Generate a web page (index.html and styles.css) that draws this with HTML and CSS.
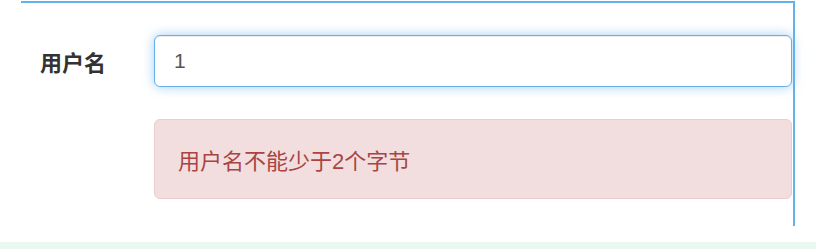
FILE: index.html
```html
<!DOCTYPE html>
<html lang="zh">
<head>
<meta charset="utf-8">
<title>表单</title>
<link rel="stylesheet" href="styles.css">
</head>
<body>
<div class="frame">
  <div class="row">
    <label class="label" for="username">用户名</label>
    <input class="input" id="username" type="text" value="1">
  </div>
  <div class="row">
    <span></span>
    <div class="alert">用户名不能少于2个字节</div>
  </div>
</div>
<div class="band"></div>
</body>
</html>
```
FILE: styles.css
```css
html, body {
  margin: 0;
  padding: 0;
  background: #fff;
  font-family: "Liberation Sans", Arial, "Noto Sans CJK SC", sans-serif;
}
.frame {
  box-sizing: border-box;
  margin: 1px 0 0 21px;
  width: 774px;
  height: 225px;
  border-top: 2px solid #64b2ec;
  border-right: 2px solid #64b2ec;
  padding: 32px 1px 0 19px;
}
.row {
  display: grid;
  grid-template-columns: 114px 638px;
  align-items: center;
}
.label {
  font-size: 22px;
  font-weight: bold;
  color: #333;
}
.input {
  box-sizing: border-box;
  height: 52px;
  width: 638px;
  margin: 0;
  padding: 0 19px;
  border: 1.5px solid #66afe9;
  border-radius: 6px;
  outline: none;
  font-family: "Liberation Sans", Arial, sans-serif;
  font-size: 21px;
  color: #555;
  box-shadow: inset 0 1px 1px rgba(0,0,0,.075), 0 0 12px rgba(102,175,233,.6);
}
.alert {
  box-sizing: border-box;
  margin-top: 32px;
  height: 80px;
  display: flex;
  align-items: center;
  padding: 0 23px;
  background: #f2dede;
  border: 1.5px solid #ebccd1;
  border-radius: 6px;
  color: #a94442;
  font-size: 22px;
}
.band {
  margin-top: 16px;
  height: 8px;
  background: #ebf8f1;
}
```
